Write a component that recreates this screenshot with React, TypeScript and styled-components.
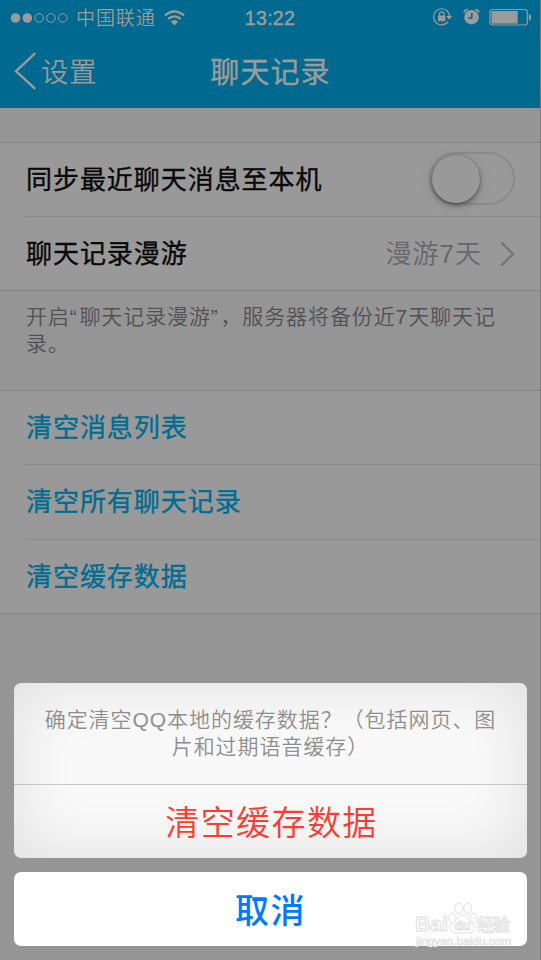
import React from "react";
import styled, { createGlobalStyle } from "styled-components";

const GlobalStyle = createGlobalStyle`
  * { box-sizing: border-box; }
  body {
    margin: 0;
    background: #959595;
    font-family: "Liberation Sans", "Noto Sans CJK SC", sans-serif;
    overflow: hidden;
  }
`;

const Screen = styled.div`
  position: relative;
  width: 541px;
  height: 960px;
  background: #959595;
  border-right: 1px solid #7c7c7c;
  display: flex;
  flex-direction: column;
  overflow: hidden;
`;

const Header = styled.header`
  height: 108px;
  flex: none;
  margin-right: -1px;
  background: #00698f;
  border-right: 1px solid #005778;
  color: #9b9b9b;
`;

const StatusBar = styled.div`
  height: 34px;
  display: grid;
  grid-template-columns: 1fr auto 1fr;
  align-items: center;
  padding: 1px 8px 0 10px;
`;

const StatusGroup = styled.div<{ $end?: boolean }>`
  display: flex;
  align-items: center;
  justify-content: ${(p) => (p.$end ? "flex-end" : "flex-start")};
`;

const Carrier = styled.span`
  font-size: 19px;
  line-height: 32px;
  letter-spacing: 0.9px;
  margin: 2px 8px 0 7px;
  font-weight: 350;
`;

const Clock = styled.span`
  font-size: 19.5px;
  line-height: 32px;
  -webkit-text-stroke: 0.5px currentColor;
  letter-spacing: 0.3px;
  padding-right: 2px;
`;

const NavBar = styled.nav`
  height: 74px;
  display: grid;
  grid-template-columns: 1fr auto 1fr;
  align-items: center;
`;

const BackButton = styled.button`
  display: flex;
  align-items: center;
  gap: 5px;
  border: 0;
  padding: 0 0 0 14px;
  background: none;
  color: inherit;
  font: 350 27.5px/40px "Liberation Sans", "Noto Sans CJK SC", sans-serif;
`;

const BackText = styled.span`
  padding-top: 3px;
  margin-left: -1px;
  letter-spacing: 0.5px;
`;

const Title = styled.h1`
  margin: 0;
  padding: 4px 0 0 1px;
  font-size: 29px;
  line-height: 40px;
  font-weight: 400;
  -webkit-text-stroke: 0.4px currentColor;
  letter-spacing: 1.1px;
`;

const Section = styled.section<{ $top: number }>`
  margin-top: ${(p) => p.$top}px;
  background: #999;
  border-top: 1px solid #858585;
  border-bottom: 1px solid #858585;
`;

const Row = styled.div<{ $height: number }>`
  height: ${(p) => p.$height}px;
  margin-left: 25px;
  padding-right: 25px;
  display: flex;
  align-items: center;
  justify-content: space-between;
  & + & { border-top: 1px solid #8a8a8a; }
`;

const Label = styled.span<{ $link?: boolean }>`
  font-size: 26px;
  line-height: 40px;
  font-weight: 400;
  -webkit-text-stroke: 0.35px currentColor;
  letter-spacing: 0.95px;
  padding-left: 1px;
  color: ${(p) => (p.$link ? "#006c90" : "#080808")};
`;

const Switch = styled.span`
  width: 86px;
  height: 53px;
  border: 2px solid #8a8a8a;
  border-radius: 27px;
  padding-left: 1px;
  margin-top: -2px;
  display: flex;
  align-items: center;
`;

const Knob = styled.span`
  width: 48px;
  height: 48px;
  border-radius: 50%;
  background: #999;
  box-shadow: 0 3px 5px rgba(0, 0, 0, 0.34), 0 0 1px 0.5px rgba(0, 0, 0, 0.2), 0 2px 16px rgba(0, 0, 0, 0.07);
`;

const Detail = styled.span`
  display: flex;
  align-items: center;
  gap: 18px;
  font-size: 26px;
  line-height: 40px;
  font-weight: 350;
  letter-spacing: 1px;
  color: #67676a;
`;

const Footnote = styled.p`
  margin: 0;
  height: 99px;
  padding: 13px 25px 0 26px;
  font-size: 21px;
  line-height: 26.5px;
  letter-spacing: 0.9px;
  font-weight: 350;
  color: #515153;
`;

const Quote = styled.span`
  letter-spacing: 2.6px;
`;

const ActionSheet = styled.div`
  position: absolute;
  left: 14px;
  right: 13px;
  bottom: 14px;
  display: flex;
  flex-direction: column;
  gap: 14px;
`;

const Panel = styled.div`
  height: 175px;
  border-radius: 7px;
  background: #f9f9f9;
  box-shadow: inset 0 0 65px rgba(0, 0, 0, 0.11);
  overflow: hidden;
`;

const Message = styled.p`
  margin: 0;
  height: 102px;
  padding-top: 23px;
  border-bottom: 1px solid #c5c5c5;
  text-align: center;
  font-size: 21px;
  line-height: 27px;
  letter-spacing: 0.95px;
  font-weight: 350;
  color: #8e8e8e;
  white-space: nowrap;
`;

const SheetButton = styled.button<{ $cancel?: boolean }>`
  display: block;
  width: 100%;
  height: ${(p) => (p.$cancel ? 74 : 73)}px;
  border: 0;
  border-radius: ${(p) => (p.$cancel ? 7 : 0)}px;
  padding: ${(p) => (p.$cancel ? "4px 0 0 0" : "2px 0 0 2px")};
  background: ${(p) => (p.$cancel ? "#fff" : "transparent")};
  color: ${(p) => (p.$cancel ? "#007aff" : "#ff3b30")};
  font-family: inherit;
  font-size: 34px;
  line-height: 50px;
  letter-spacing: 1.4px;
  font-weight: ${(p) => (p.$cancel ? 500 : 350)};
`;

const Watermark = styled.div`
  position: absolute;
  left: 414px;
  top: 901px;
  width: 100px;
`;

const SignalDots = () => (
  <svg width="59" height="12" viewBox="0 0 59 12">
    {[5.5, 17.3, 29.2, 41, 52.8].map((x, i) => (
      <circle key={x} cx={x} cy="6" r={i < 2 ? 4.8 : 4.3} fill={i < 2 ? "#9b9b9b" : "none"} stroke={i < 2 ? "none" : "#9b9b9b"} />
    ))}
  </svg>
);

const Wifi = () => (
  <svg width="21" height="16" viewBox="0 0 21 16" fill="none" stroke="#9b9b9b" strokeWidth="2.3">
    <path d="M1 5.4Q10.5-2.7 20 5.4M4.3 9Q10.5 3.8 16.7 9" />
    <path d="M6.8 11.7Q10.5 8.5 14.2 11.7L10.5 15.4Z" fill="#9b9b9b" stroke="none" />
  </svg>
);

const StatusIcons = () => (
  <svg width="100" height="20" viewBox="0 0 100 20" fill="none" stroke="#9b9b9b" strokeWidth="1.2">
    <path d="M16.1 13.6A8 8 0 1 1 17.7 8.4" />
    <path d="M14.1 8H20.2L17.2 11.7Z" fill="#9b9b9b" stroke="none" />
    <rect x="6.1" y="7.5" width="7.2" height="5.7" fill="#9b9b9b" stroke="none" />
    <path d="M7.5 7.7V6.2A2.2 2.4 0 0 1 11.9 6.2V7.7" strokeWidth="1.3" />
    <circle cx="39.5" cy="9.2" r="7.3" fill="#9b9b9b" stroke="none" />
    <path d="M39.8 4.9V10H36.3" stroke="#00698f" strokeWidth="1.5" />
    <path d="M32 4.5Q32.7 1.8 35.7 1.3M43.4 1.3Q46.4 1.8 47 4.5" strokeWidth="1.7" />
    <rect x="58" y="1.5" width="37.3" height="15.5" rx="2.4" />
    <rect x="59.5" y="3" width="26.2" height="12.6" fill="#9b9b9b" stroke="none" />
    <path d="M96.8 6Q99.2 6.3 99.2 9.2T96.8 12.5Z" fill="#9b9b9b" stroke="none" />
  </svg>
);

const BackChevron = () => (
  <svg width="23" height="38" viewBox="0 0 23 38" fill="none" stroke="#9b9b9b" strokeWidth="2.3">
    <path d="M21.2 1.2L2 19.2L21.2 36.8" />
  </svg>
);

const ForwardChevron = () => (
  <svg width="15" height="26" viewBox="0 0 15 26" fill="none" stroke="#747476" strokeWidth="2.2">
    <path d="M1.2 1.4L13 13L1.2 24.6" />
  </svg>
);

const BaiduMark = () => (
  <svg width="100" height="48" viewBox="0 0 100 48" fill="#fff" stroke="#e0e0e0" strokeWidth="1" fontFamily="Liberation Sans, Noto Sans CJK SC, sans-serif">
    <text x="1" y="30" fontSize="20" fontWeight="700" textLength="33" lengthAdjust="spacingAndGlyphs">Bai</text>
    <ellipse cx="38.5" cy="17" rx="3.7" ry="4.8" />
    <ellipse cx="44.8" cy="7.5" rx="4" ry="5.3" />
    <ellipse cx="53.7" cy="7.5" rx="4" ry="5.3" />
    <ellipse cx="59.6" cy="17" rx="3.7" ry="4.8" />
    <path d="M48.5 14.5C54 14.5 54.5 19.5 58 22.5C63 27 60 32 56 32H42C36 31.5 34 26 38.5 22.5C43 19 43.5 14.5 48.5 14.5Z" />
    <text x="40.5" y="29" fontSize="13" fontWeight="700" textLength="16" lengthAdjust="spacingAndGlyphs">du</text>
    <text x="63" y="29.5" fontSize="17" fontWeight="500" textLength="33" strokeWidth=".8">经验</text>
    <text x="2" y="43.5" fontSize="10" textLength="95" lengthAdjust="spacingAndGlyphs" fill="#f5f5f5" stroke="#e2e2e2" strokeWidth=".6">jingyan.baidu.com</text>
  </svg>
);

export default function App() {
  return (
    <>
      <GlobalStyle />
      <Screen>
        <Header>
          <StatusBar>
            <StatusGroup>
              <SignalDots />
              <Carrier>中国联通</Carrier>
              <Wifi />
            </StatusGroup>
            <Clock>13:22</Clock>
            <StatusGroup $end>
              <StatusIcons />
            </StatusGroup>
          </StatusBar>
          <NavBar>
            <BackButton><BackChevron /><BackText>设置</BackText></BackButton>
            <Title>聊天记录</Title>
          </NavBar>
        </Header>
        <Section $top={34}>
          <Row $height={73}>
            <Label>同步最近聊天消息至本机</Label>
            <Switch><Knob /></Switch>
          </Row>
          <Row $height={74}>
            <Label>聊天记录漫游</Label>
            <Detail>漫游7天<ForwardChevron /></Detail>
          </Row>
        </Section>
        <Footnote>开启<Quote>“</Quote>聊天记录漫游<Quote>”</Quote>，服务器将备份近7天聊天记<br />录。</Footnote>
        <Section $top={0}>
          <Row $height={73}><Label $link>清空消息列表</Label></Row>
          <Row $height={75}><Label $link>清空所有聊天记录</Label></Row>
          <Row $height={74}><Label $link>清空缓存数据</Label></Row>
        </Section>
        <ActionSheet>
          <Panel>
            <Message>确定清空QQ本地的缓存数据？（包括网页、图<br />片和过期语音缓存）</Message>
            <SheetButton>清空缓存数据</SheetButton>
          </Panel>
          <SheetButton $cancel>取消</SheetButton>
        </ActionSheet>
        <Watermark><BaiduMark /></Watermark>
      </Screen>
    </>
  );
}
